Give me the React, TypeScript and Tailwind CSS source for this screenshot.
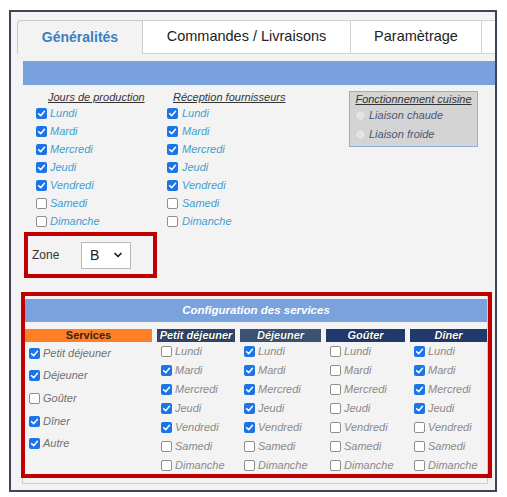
import React from 'react';
import { ChevronDown } from 'lucide-react';

const days = ['Lundi', 'Mardi', 'Mercredi', 'Jeudi', 'Vendredi', 'Samedi', 'Dimanche'];

// the five first days ticked
const weekdays = [true, true, true, true, true, false, false];

const services = [
  { label: 'Petit déjeuner', checked: true },
  { label: 'Déjeuner', checked: true },
  { label: 'Goûter', checked: false },
  { label: 'Dîner', checked: true },
  { label: 'Autre', checked: true },
];

const meals = [
  { title: 'Petit déjeuner', width: 'w-[78px]', bg: 'bg-[#2e4568]', days: [false, true, true, true, true, false, false] },
  { title: 'Déjeuner', width: 'w-[81px]', bg: 'bg-[#3c5274]', days: [true, true, true, true, true, false, false] },
  { title: 'Goûter', width: 'w-[79px]', bg: 'bg-[#1f3a6b]', days: [false, false, false, false, false, false, false] },
  { title: 'Dîner', width: 'w-[77px]', bg: 'bg-[#1f3a6b]', days: [true, true, true, true, false, false, false] },
];

function Box({ checked }: { checked: boolean }) {
  if (checked) {
    return (
      <span className="flex h-[11px] w-[11px] shrink-0 items-center justify-center rounded-[2px] bg-[#1b74e8]">
        <svg width="9" height="9" viewBox="0 0 10 10">
          <path d="M1.8 5.2 4.1 7.4 8.3 2.6" fill="none" stroke="white" strokeWidth="1.7" strokeLinecap="round" strokeLinejoin="round" />
        </svg>
      </span>
    );
  }
  return <span className="h-[11px] w-[11px] shrink-0 rounded-[2px] border border-[#8e8e8e] bg-white" />;
}

function Radio({ label }: { label: string }) {
  return (
    <div className="flex h-[19px] items-center gap-[3px] pl-[5px]">
      <span className="h-[11px] w-[11px] shrink-0 rounded-full border border-[#cacaca] bg-[#e3e3e3]" />
      <span className="text-[11px] italic leading-none text-[#4b5775]">{label}</span>
    </div>
  );
}

export default function App() {
  return (
    <div className="h-[497px] w-[507px] bg-white pl-[9px] pt-[10px] font-['Liberation_Sans',Arial,sans-serif]">
      <div className="h-[482px] w-[488px] overflow-hidden border-2 border-[#3c4659] bg-[#f3f3f3]">
        {/* Tabs */}
        <div className="ml-[6px] mt-[8px] flex h-[34px]">
          <div className="flex w-[126px] shrink-0 items-center justify-center rounded-tl-[4px] border border-b-0 border-[#c9c9c9] bg-[#f3f3f3] text-[14px] font-bold text-[#3a7fc1]">
            Généralités
          </div>
          <div className="flex w-[208px] shrink-0 items-center justify-center border-y border-r border-[#d2d2d2] bg-white text-[14.5px] text-[#222]">
            Commandes / Livraisons
          </div>
          <div className="flex w-[131px] shrink-0 items-center justify-center border-y border-r border-[#d2d2d2] bg-white text-[14.5px] text-[#222]">
            Paramètrage
          </div>
          <div className="w-[40px] shrink-0 border-y border-r border-[#d2d2d2] bg-white" />
        </div>

        <div className="pl-[12px] pt-[7px]">
          <div className="h-[24px] bg-[#79a1dd]" />
        </div>

        {/* Jours / réception / fonctionnement */}
        <div className="flex pl-[25px] pt-[6px]">
          <div className="w-[131px] shrink-0">
            <div className="h-[13px] pl-[12px] text-[11px] italic leading-[13px] text-[#333] underline">Jours de production</div>
            {days.map((d, i) => (
              <div key={d} className="flex h-[18px] items-center gap-[3px]">
                <Box checked={weekdays[i]} />
                <span className="text-[11px] italic leading-none text-[#3fa0cf]">{d}</span>
              </div>
            ))}
          </div>
          <div className="w-[182px] shrink-0">
            <div className="h-[13px] pl-[6px] text-[11px] italic leading-[13px] text-[#333] underline">Réception fournisseurs</div>
            {days.map((d, i) => (
              <div key={d} className="flex h-[18px] items-center gap-[4px]">
                <Box checked={weekdays[i]} />
                <span className="text-[11px] italic leading-none text-[#3fa0cf]">{d}</span>
              </div>
            ))}
          </div>
          <div className="h-[56px] w-[129px] shrink-0 border border-[#8db0e4] bg-[#d4d4d4]">
            <div className="h-[14px] text-center text-[11px] italic leading-[14px] text-[#333] underline">Fonctionnement cuisine</div>
            <Radio label="Liaison chaude" />
            <Radio label="Liaison froide" />
          </div>
        </div>

        {/* Zone */}
        <div className="ml-[13px] mt-[2px] flex h-[46px] w-[133px] items-center border-4 border-[#c00000] pl-[4px]">
          <span className="w-[49px] text-[12px] text-[#333]">Zone</span>
          <div className="flex h-[27px] w-[50px] items-center justify-between border border-[#b8b8b8] bg-white pl-[8px] pr-[6px]">
            <span className="text-[14px] text-[#222]">B</span>
            <ChevronDown size={12} strokeWidth={3.5} className="text-[#222]" />
          </div>
        </div>

        {/* Configuration des services */}
        <div className="relative ml-[11px] mt-[18px] w-[466px] border-x border-b border-[#cfcfcf] pb-[8px] pl-[2px] pt-[3px]">
          <div className="flex h-[23px] items-center justify-center bg-[#7aa2dd] text-[11.5px] font-bold italic text-white">
            Configuration des services
          </div>
          <div className="mt-[7px] flex gap-[5px]">
            <div className="w-[127px] shrink-0">
              <div className="h-[13px] bg-[#ff7f27] text-center text-[11px] font-bold leading-[13px] text-[#3a2510]">Services</div>
              {services.map((s) => (
                <div key={s.label} className="flex h-[22.6px] items-center gap-[3px] pl-[4px]">
                  <Box checked={s.checked} />
                  <span className="text-[11px] italic leading-none text-[#707070]">{s.label}</span>
                </div>
              ))}
            </div>
            {meals.map((m) => (
              <div key={m.title} className={`${m.width} shrink-0`}>
                <div className={`${m.bg} h-[13px] text-center text-[11px] font-bold italic leading-[13px] text-white [text-shadow:0_0_1px_#000]`}>
                  {m.title}
                </div>
                {days.map((d, i) => (
                  <div key={d} className="flex h-[19px] items-center gap-[3px] pl-[4px]">
                    <Box checked={m.days[i]} />
                    <span className="text-[11px] italic leading-none text-[#8a8a8a]">{d}</span>
                  </div>
                ))}
              </div>
            ))}
          </div>
          {/* red highlight drawn over the section */}
          <div className="pointer-events-none absolute -left-[2px] -right-[5px] -top-[4px] bottom-[5px] border-4 border-[#c00000]" />
        </div>
      </div>
    </div>
  );
}
